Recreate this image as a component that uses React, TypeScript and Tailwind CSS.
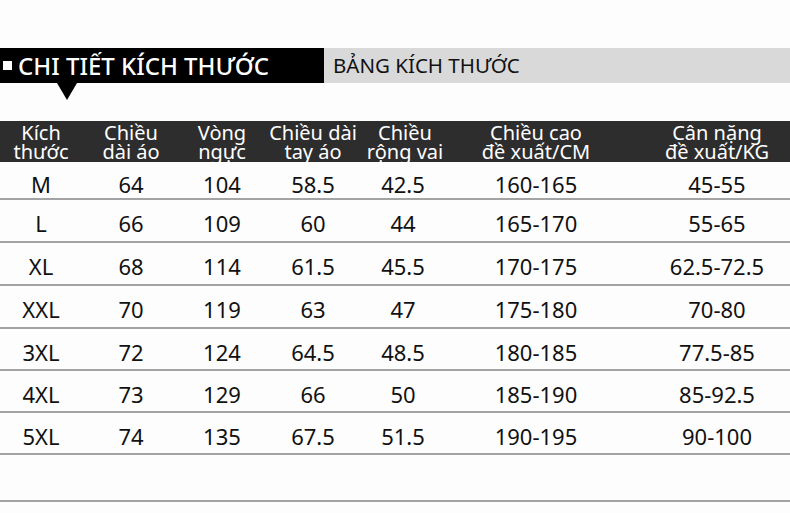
import React from 'react';

const rows = [
  ['M', '64', '104', '58.5', '42.5', '160-165', '45-55'],
  ['L', '66', '109', '60', '44', '165-170', '55-65'],
  ['XL', '68', '114', '61.5', '45.5', '170-175', '62.5-72.5'],
  ['XXL', '70', '119', '63', '47', '175-180', '70-80'],
  ['3XL', '72', '124', '64.5', '48.5', '180-185', '77.5-85'],
  ['4XL', '73', '129', '66', '50', '185-190', '85-92.5'],
  ['5XL', '74', '135', '67.5', '51.5', '190-195', '90-100'],
];

// row heights incl. the 2px rule, so the rules land where the picture has them
const rowH = ['h-[38px]', 'h-[43px]', 'h-[43px]', 'h-[43px]', 'h-[42px]', 'h-[42px]', 'h-[42px]'];

const headers = [
  ['Kích', 'thước'],
  ['Chiều', 'dài áo'],
  ['Vòng', 'ngực'],
  ['Chiều dài', 'tay áo'],
  ['Chiều', 'rộng vai'],
  ['Chiều cao', 'đề xuất/CM'],
  ['Cân nặng', 'đề xuất/KG'],
];

const cols = 'grid grid-cols-[82px_98px_84px_98px_86px_180px_1fr]';

function App() {
  return (
    <div className="h-[513px] w-[790px] overflow-hidden bg-[#fdfdfd] font-['Noto_Sans',sans-serif] text-[#111]">
      <div className="pt-[48px]">
        <div className="flex h-[35px]">
          <div className="flex w-[324px] items-center bg-black pl-[3px]">
            <span className="mr-[6px] h-[9px] w-[9px] bg-white" />
            <span className="text-[24px] font-medium leading-none text-white">CHI TIẾT KÍCH THƯỚC</span>
          </div>
          <div className="flex flex-1 items-center bg-[#d9d9d9] pl-[9px]">
            <span className="text-[20.5px] leading-none text-[#111]">BẢNG KÍCH THƯỚC</span>
          </div>
        </div>
        <svg className="ml-[57px] block" width="20" height="17" viewBox="0 0 20 17">
          <path d="M0 0 L20 0 L10 17 Z" fill="#000" />
        </svg>
      </div>

      <div className={`${cols} mt-[21px] h-[41px] bg-[#2d2d2d] text-white`}>
        {headers.map((h, i) => (
          <div
            key={i}
            className={`flex flex-col items-center justify-center text-[20px] leading-[19px] ${i === 6 ? 'pl-[16px]' : ''} ${i === 5 ? 'pr-[4px]' : ''}`}
          >
            <span>{h[0]}</span>
            <span>{h[1]}</span>
          </div>
        ))}
      </div>

      {rows.map((r, ri) => (
        <div key={ri} className={`${cols} ${rowH[ri]} border-b-2 border-[#a3a3a3] text-[22px]`}>
          {r.map((c, ci) => (
            <div
              key={ci}
              className={`flex items-center justify-center pt-[6px] ${ci === 6 ? 'pl-[16px]' : ''} ${ci === 5 || ci === 4 ? 'pr-[4px]' : ''}`}
            >
              {c}
            </div>
          ))}
        </div>
      ))}

      <div className="h-[47px] border-b-2 border-[#a3a3a3]" />
    </div>
  );
}

export default App;
